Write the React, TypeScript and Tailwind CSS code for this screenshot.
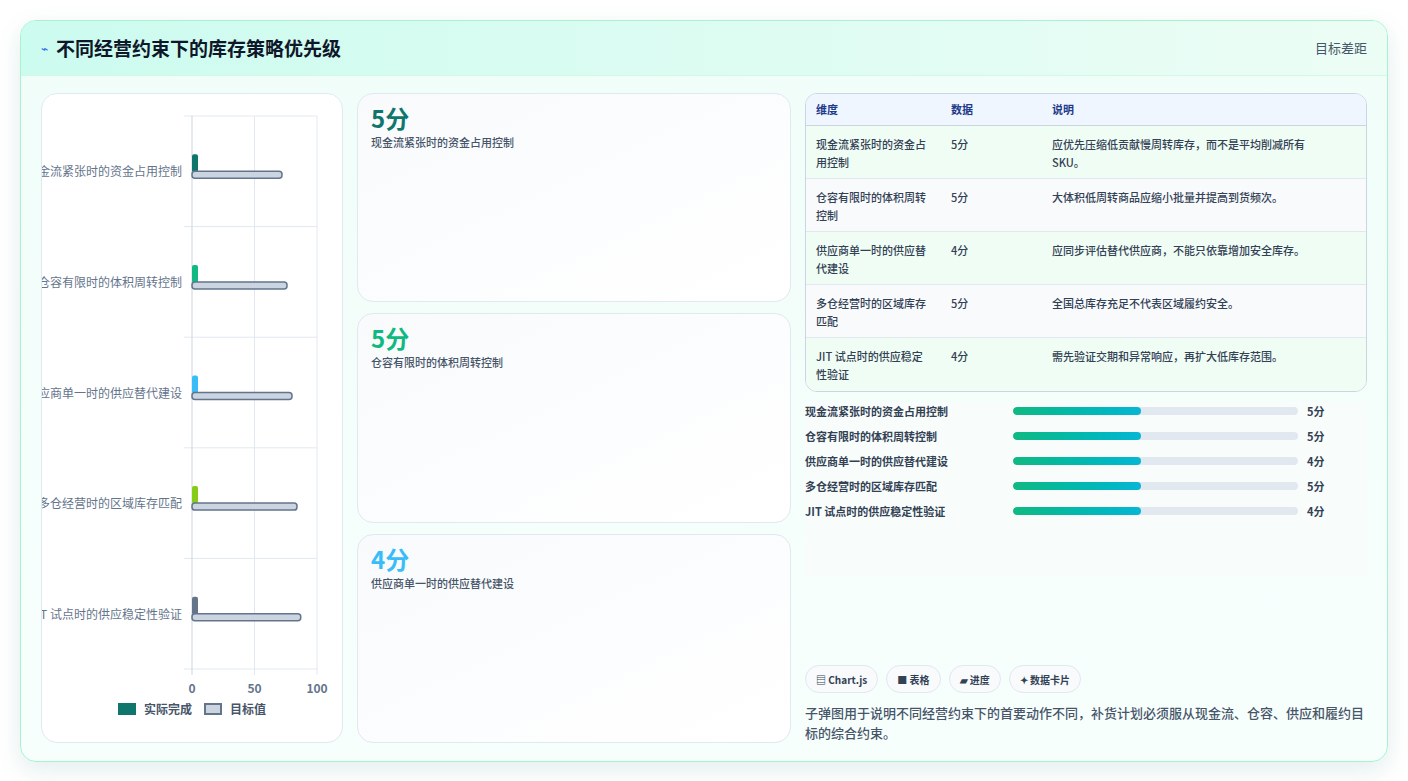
import React from "react"

const rows = [
  { name: "现金流紧张时的资金占用控制", score: "5分", desc: "应优先压缩低贡献慢周转库存，而不是平均削减所有 SKU。", target: 72, color: "#0f766e" },
  { name: "仓容有限时的体积周转控制", score: "5分", desc: "大体积低周转商品应缩小批量并提高到货频次。", target: 76, color: "#10b981" },
  { name: "供应商单一时的供应替代建设", score: "4分", desc: "应同步评估替代供应商，不能只依靠增加安全库存。", target: 80, color: "#38bdf8" },
  { name: "多仓经营时的区域库存匹配", score: "5分", desc: "全国总库存充足不代表区域履约安全。", target: 84, color: "#84cc16" },
  { name: "JIT 试点时的供应稳定性验证", score: "4分", desc: "需先验证交期和异常响应，再扩大低库存范围。", target: 87, color: "#64748b" },
]

const font = { fontFamily: '"Noto Sans CJK SC", "Noto Sans", sans-serif' }

function Chart() {
  const x0 = 150, w = 125, top = 22, h = 553
  const rh = h / 5
  return (
    <svg width="300" height="606" viewBox="0 0 300 606" className="block">
      {[0, 1, 2, 3, 4, 5].map((i) => (
        <line key={i} x1={x0 - 8} x2={x0 + w} y1={top + i * rh} y2={top + i * rh} stroke="#e2e8f0" />
      ))}
      {[0, 50, 100].map((v) => (
        <line key={v} x1={x0 + (v / 100) * w} x2={x0 + (v / 100) * w} y1={top} y2={top + h + 6} stroke={v === 0 ? "#cbd5e1" : "#e2e8f0"} />
      ))}
      {rows.map((r, i) => {
        const cy = top + i * rh + rh / 2
        return (
          <g key={i}>
            <text x={x0 - 10} y={cy + 5} textAnchor="end" fontSize="12" fill="#64748b" style={font}>
              {r.name}
            </text>
            <rect x={x0} y={cy - 17} width={6} height={18} rx={2} fill={r.color} />
            <rect x={x0} y={cy} width={(r.target / 100) * w} height={7} rx={3} fill="#cbd5e1" stroke="#64748b" strokeWidth="1.5" />
          </g>
        )
      })}
      {[0, 50, 100].map((v) => (
        <text key={v} x={x0 + (v / 100) * w} y={top + h + 24} textAnchor="middle" fontSize="12" fontWeight="700" fill="#64748b" style={font}>
          {v}
        </text>
      ))}
    </svg>
  )
}

export default function App() {
  return (
    <div className="w-[1408px] h-[781px] bg-white p-5" style={font}>
      <div className="h-[742px] rounded-2xl border border-[#a7f3d0] overflow-hidden bg-gradient-to-b from-[#f0fdf8] to-[#f7fffd] shadow-[0_8px_24px_rgba(15,118,110,0.12)] flex flex-col">
        <div className="h-[55px] shrink-0 flex items-center justify-between px-5 bg-gradient-to-r from-[#ccfbef] to-[#ecfdf5] border-b border-[#d1fae5]">
          <div className="flex items-center gap-2">
            <span className="text-[#2563eb] text-xs">⌁</span>
            <span className="text-[19px] font-bold text-[#0f172a]">不同经营约束下的库存策略优先级</span>
          </div>
          <span className="text-[13px] text-[#475569]">目标差距</span>
        </div>
        <div className="flex-1 flex gap-[14px] px-5 pt-[17px] pb-[18px]">
          <div className="w-[302px] bg-white rounded-2xl border border-[#e2e8f0] overflow-hidden flex flex-col">
            <Chart />
            <div className="flex items-center justify-center gap-2 text-[12px] font-bold text-[#475569]">
              <span className="w-[18px] h-[12px] bg-[#0f766e]" />
              <span>实际完成</span>
              <span className="w-[18px] h-[12px] bg-[#cbd5e1] border-2 border-[#64748b] ml-1" />
              <span>目标值</span>
            </div>
          </div>
          <div className="w-[434px] flex flex-col gap-[11px]">
            {rows.slice(0, 3).map((r, i) => (
              <div key={i} className="flex-1 rounded-2xl border border-[#e2e8f0] bg-gradient-to-br from-[#f8fafc] to-white px-[13px] py-[8px]">
                <div className="text-[24px] font-bold leading-8" style={{ color: r.color }}>{r.score}</div>
                <div className="text-[11px] text-[#475569] font-medium">{r.name}</div>
              </div>
            ))}
          </div>
          <div className="flex-1 flex flex-col">
            <div className="rounded-xl border border-[#cbd5e1] overflow-hidden bg-white">
              <div className="grid grid-cols-[135px_101px_1fr] h-[32px] items-center bg-[#eff6ff] border-b border-[#cbd5e1] px-[10px] text-[11px] font-bold text-[#1e3a8a]">
                <span>维度</span><span>数据</span><span>说明</span>
              </div>
              {rows.map((r, i) => (
                <div key={i} className={`grid grid-cols-[135px_101px_1fr] h-[53px] pt-[9px] px-[10px] text-[11px] font-medium text-[#334155] leading-[18px] ${i % 2 === 0 ? "bg-[#f0fdf4]" : "bg-[#f8fafc]"} ${i < 4 ? "border-b border-[#e2e8f0]" : ""}`}>
                  <span className="pr-6">{r.name}</span>
                  <span>{r.score}</span>
                  <span className="pr-6">{r.desc}</span>
                </div>
              ))}
            </div>
            <div className="flex flex-col gap-[7px] mt-[10px] pb-[56px] bg-[#f8fdfb]">
              {rows.map((r, i) => (
                <div key={i} className="flex items-center h-[18px] text-[11px] font-bold text-[#334155]">
                  <span className="w-[208px]">{r.name}</span>
                  <div className="w-[285px] h-[8px] rounded-full bg-[#e2e8f0] overflow-hidden">
                    <div className="h-full w-[45%] rounded-full bg-gradient-to-r from-[#10b981] to-[#06b6d4]" />
                  </div>
                  <span className="ml-[9px]">{r.score}</span>
                </div>
              ))}
            </div>
            <div className="flex-1" />
            <div className="flex gap-[8px] text-[10px] font-bold text-[#334155]">
              {["▤ Chart.js", "■ 表格", "▰ 进度", "✦ 数据卡片"].map((c) => (
                <span key={c} className="h-[28px] px-[10px] flex items-center rounded-full border border-[#e2e8f0] bg-[#f8fafc]">{c}</span>
              ))}
            </div>
            <p className="mt-[10px] text-[13px] leading-[20px] font-medium text-[#475569]">
              子弹图用于说明不同经营约束下的首要动作不同，补货计划必须服从现金流、仓容、供应和履约目标的综合约束。
            </p>
          </div>
        </div>
      </div>
    </div>
  )
}
